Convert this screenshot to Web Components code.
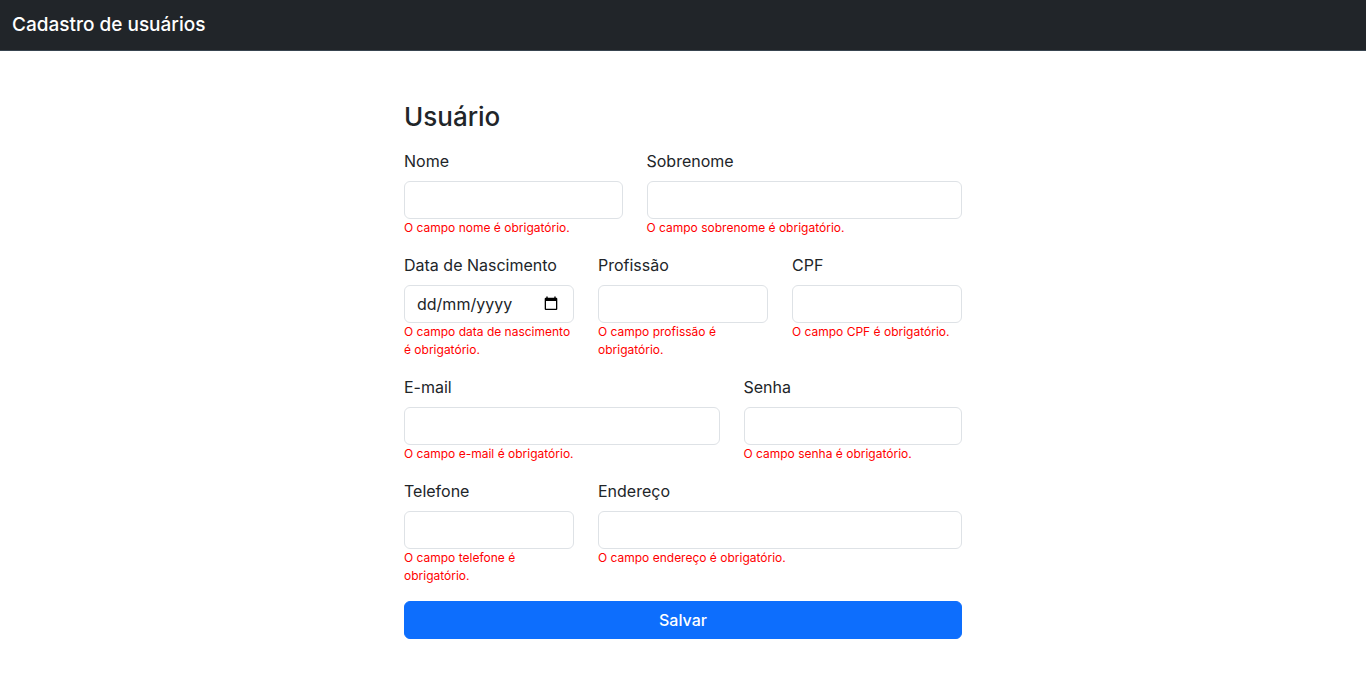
<!DOCTYPE html>
<html lang="pt-BR">
<head>
<meta charset="utf-8">
<meta name="viewport" content="width=device-width, initial-scale=1">
<title>Cadastro de usuários</title>
<style>
  body {
    margin: 0;
    background: #fff;
    color: #212529;
    font: 400 16px/24px Inter, "Liberation Sans", sans-serif;
  }
</style>
</head>
<body>
<app-navbar>Cadastro de usuários</app-navbar>
<user-form></user-form>

<template id="navbar-template">
  <style>
    :host {
      display: block;
      background: #212529;
      border-bottom: 1px solid #38444f;
      color: #fff;
    }
    nav { padding: 10px 12px; }
    a {
      color: inherit;
      font-size: 19px;
      font-weight: 500;
      line-height: 30px;
      text-decoration: none;
      display: block;
    }
  </style>
  <nav><a href="#"><slot></slot></a></nav>
</template>

<template id="field-template">
  <style>
    :host { display: block; min-width: 0; }
    label { display: block; margin-bottom: 8px; }
    .box {
      display: flex;
      align-items: center;
      box-sizing: border-box;
      height: 38px;
      border: 1px solid #dee2e6;
      border-radius: 6px;
      background: #fff;
    }
    .box:focus-within { border-color: #86b7fe; box-shadow: 0 0 0 4px rgba(13, 110, 253, .25); }
    input {
      flex: 1;
      min-width: 0;
      padding: 6px 12px;
      border: 0;
      outline: 0;
      background: none;
      color: inherit;
      font: inherit;
    }
    input::placeholder { color: inherit; opacity: 1; }
    .picker {
      display: none;
      margin: 0 15px 0 0;
      padding: 0;
      border: 0;
      background: none;
      color: #000;
      cursor: pointer;
    }
    :host([kind="date"]) .picker { display: block; }
    svg { display: block; width: 14px; height: 16px; }
    .error { margin: 0; color: #f00; font-size: 12px; line-height: 18px; }
  </style>
  <label for="control"></label>
  <div class="box">
    <input id="control" aria-describedby="error">
    <button class="picker" type="button" aria-label="Abrir calendário">
      <svg viewBox="0 0 14 16" aria-hidden="true">
        <path fill="currentColor" fill-rule="evenodd" d="M2.3 .4h1.4v1.3h6.6V.4h1.4v1.3h.5q1.1 0 1.1 1.1v10.1q0 1.1-1.1 1.1H1.8q-1.1 0-1.1-1.1V2.8q0-1.1 1.1-1.1h.5zM2 5v7.8h10V5z"/>
      </svg>
    </button>
  </div>
  <p class="error" id="error"><slot></slot></p>
</template>

<template id="form-template">
  <style>
    :host { display: block; padding: 48px 24px; }
    form { max-width: 558px; margin: 0 auto; }
    h1 { margin: 0 0 14px; font-size: 26px; font-weight: 500; line-height: 36px; }
    .grid {
      display: grid;
      grid-template-columns: repeat(12, minmax(0, 1fr));
      gap: 16px 24px;
    }
    .w4 { grid-column: span 4; }
    .w5 { grid-column: span 5; }
    .w7 { grid-column: span 7; }
    .w8 { grid-column: span 8; }
    button {
      grid-column: 1 / -1;
      height: 38px;
      padding: 6px 12px;
      border: 1px solid #0d6efd;
      border-radius: 6px;
      background: #0d6efd;
      color: #fff;
      font: inherit;
      font-weight: 500;
      cursor: pointer;
    }
    @media (max-width: 500px) {
      .grid > * { grid-column: 1 / -1; }
    }
  </style>
  <form novalidate>
    <h1>Usuário</h1>
    <div class="grid">
      <form-field class="w5" label="Nome" name="nome">O campo nome é obrigatório.</form-field>
      <form-field class="w7" label="Sobrenome" name="sobrenome">O campo sobrenome é obrigatório.</form-field>
      <form-field class="w4" label="Data de Nascimento" name="nascimento" kind="date" placeholder="dd/mm/yyyy">O campo data de nascimento é obrigatório.</form-field>
      <form-field class="w4" label="Profissão" name="profissao">O campo profissão é obrigatório.</form-field>
      <form-field class="w4" label="CPF" name="cpf">O campo CPF é obrigatório.</form-field>
      <form-field class="w7" label="E-mail" name="email" type="email">O campo e-mail é obrigatório.</form-field>
      <form-field class="w5" label="Senha" name="senha" type="password">O campo senha é obrigatório.</form-field>
      <form-field class="w4" label="Telefone" name="telefone" type="tel">O campo telefone é obrigatório.</form-field>
      <form-field class="w8" label="Endereço" name="endereco">O campo endereço é obrigatório.</form-field>
      <button type="submit">Salvar</button>
    </div>
  </form>
</template>

<script>
  class TemplateElement extends HTMLElement {
    constructor() {
      super();
      const template = document.getElementById(this.constructor.template);
      this.attachShadow({ mode: "open" }).append(template.content.cloneNode(true));
    }
  }

  class AppNavbar extends TemplateElement {
    static template = "navbar-template";
  }

  class FormField extends TemplateElement {
    static template = "field-template";
    static formAssociated = true;

    constructor() {
      super();
      this.internals = this.attachInternals();
      this.input = this.shadowRoot.querySelector("input");
      this.input.addEventListener("input", () => this.internals.setFormValue(this.input.value));
      this.shadowRoot.querySelector(".picker").addEventListener("click", () => this.input.focus());
    }

    connectedCallback() {
      this.shadowRoot.querySelector("label").textContent = this.getAttribute("label");
      this.input.type = this.getAttribute("type") || "text";
      this.input.placeholder = this.getAttribute("placeholder") || "";
    }
  }

  class UserForm extends TemplateElement {
    static template = "form-template";

    connectedCallback() {
      this.shadowRoot.querySelector("form").addEventListener("submit", event => event.preventDefault());
    }
  }

  customElements.define("app-navbar", AppNavbar);
  customElements.define("form-field", FormField);
  customElements.define("user-form", UserForm);
</script>
</body>
</html>
